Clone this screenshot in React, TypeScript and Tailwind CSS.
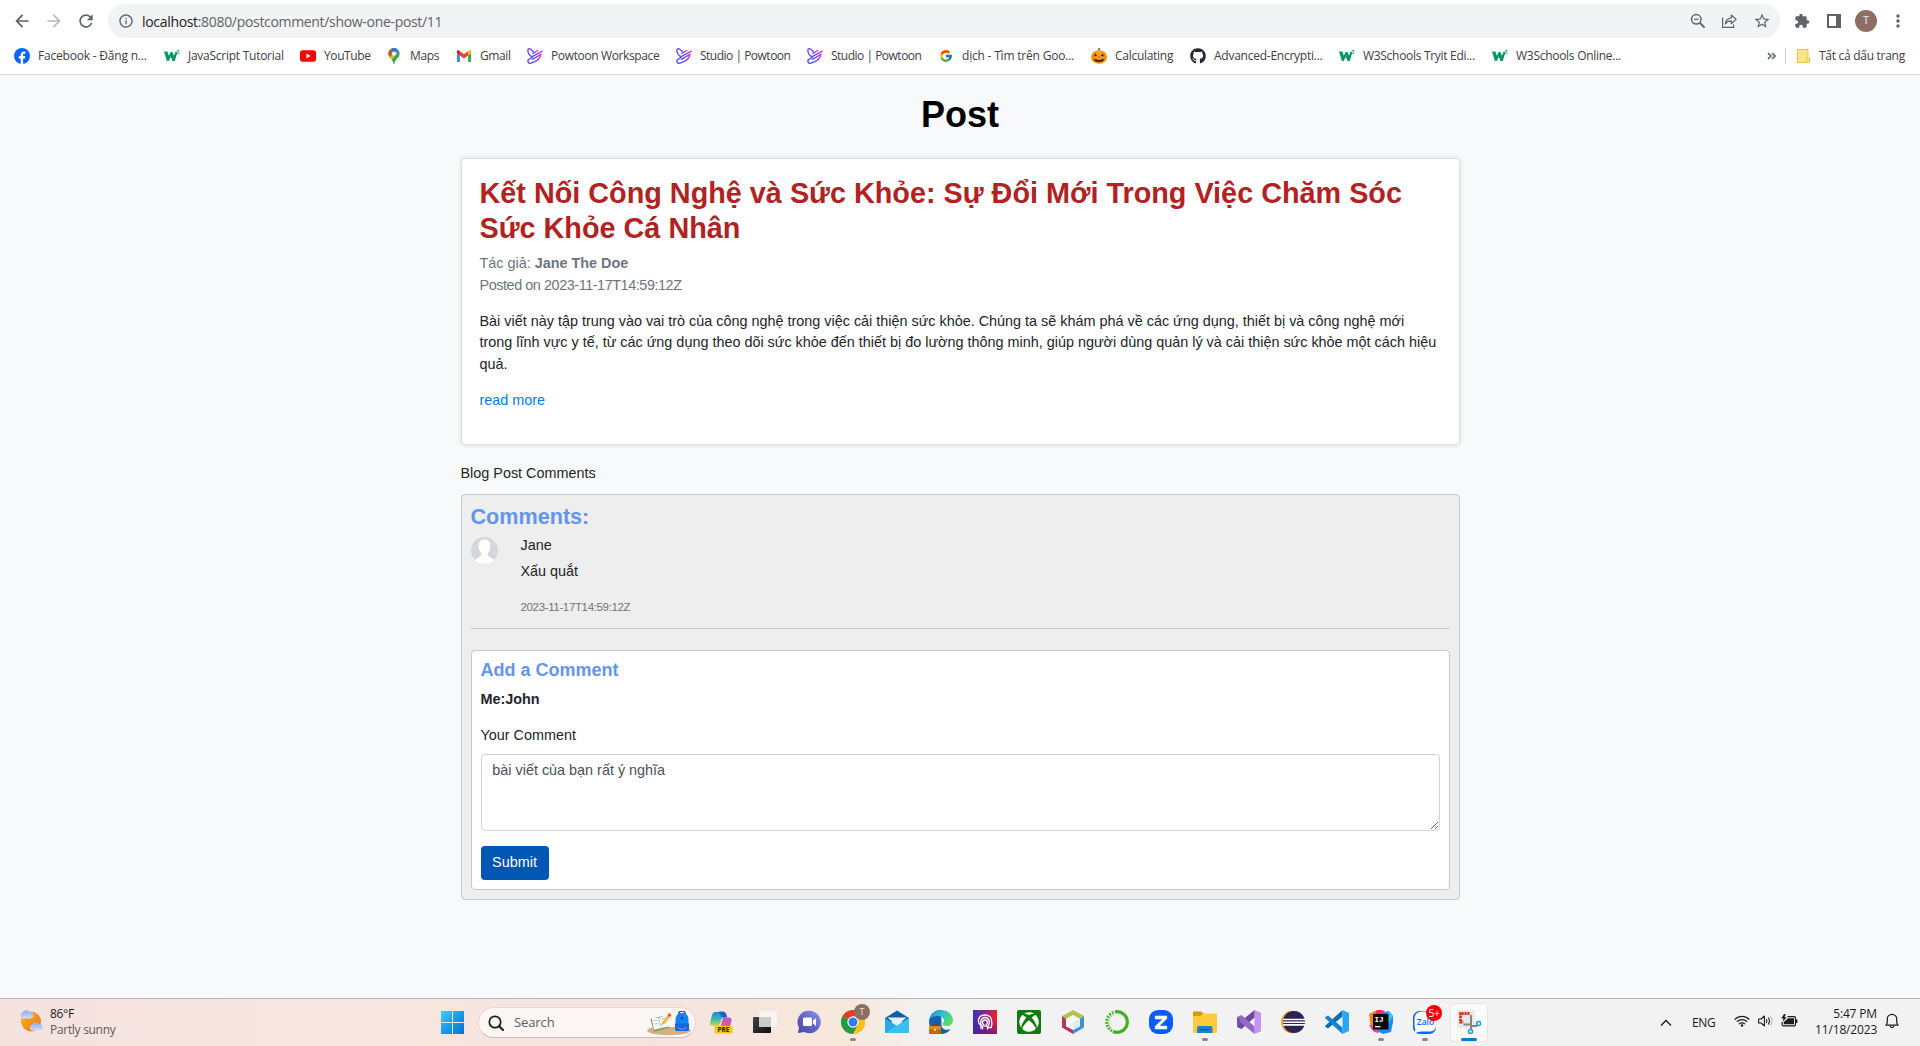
import React from "react";
import {
  MdArrowBack,
  MdArrowForward,
  MdExtension,
  MdInfoOutline,
  MdMoreVert,
  MdRefresh,
  MdStarBorder,
} from "react-icons/md";
import { FaGithub, FaXbox } from "react-icons/fa";
import { FcGoogle } from "react-icons/fc";

/* ---------- bookmark favicons ---------- */

const Facebook = () => (
  <svg viewBox="0 0 16 16" className="size-4">
    <circle cx="8" cy="8" r="8" fill="#0866ff" />
    <path d="M6.7 16v-5.4H4.9V8h1.8V6.9c0-2.3 1.1-3.5 3.3-3.5.5 0 1 .1 1.4.2v2.1h-1c-1 0-1.3.5-1.3 1.3v1h2.2l-.4 2.6H9.1V16z" fill="#fff" />
  </svg>
);

const W3 = () => (
  <svg viewBox="0 0 16 16" className="size-4">
    <path d="M0 3.600h3.400l1.400 4.200 1.600-3.600 2-.4 1.500 3.900 1.600-4h2L10.800 13H8.500L6.800 8.700 4.700 13H2.900z" fill="#059862" />
    <path d="M12.900 2.300h2.100l-1.100 1.400c1.500 0 1.600 1.900.2 1.900-.6 0-1-.2-1.200-.5" fill="none" stroke="#2fa87a" strokeWidth=".9" />
  </svg>
);

const YouTube = () => (
  <svg viewBox="0 0 16 16" className="size-4">
    <rect x="0" y="2.3" width="16" height="11.4" rx="2.8" fill="#f00" />
    <path d="m6.4 5.6 4.2 2.4-4.2 2.4z" fill="#fff" />
  </svg>
);

const Maps = () => (
  <svg viewBox="0 0 16 16" className="size-4">
    <clipPath id="pin">
      <path d="M8 0a5.6 5.6 0 0 1 5.6 5.6C13.6 9.800 9.300 11 8.500 15.400q-.5 1-1 0C6.700 11 2.400 9.800 2.400 5.600A5.600 5.600 0 0 1 8 0z" />
    </clipPath>
    <g clipPath="url(#pin)">
      <rect width="16" height="16" fill="#34a853" />
      <path d="M0 16V7l4 2.500L12 0l4 0v0L4.500 13z" fill="#fbbc04" />
      <path d="M0 0h8l-5 6-3-2z" fill="#ea4335" />
      <path d="M7 0h9v4L9 5.500z" fill="#4285f4" />
      <path d="M0 3l2.500-1L6 4.800 3 8.500z" fill="#ea4335" />
      <path d="m6 0 5.500.6L7 5z" fill="#1a73e8" />
    </g>
    <circle cx="8" cy="5.600" r="2.100" fill="#fff" />
  </svg>
);

const Gmail = () => (
  <svg viewBox="0 0 16 16" className="size-4">
    <path d="M1 14h2.900V7.300L1 5z" fill="#4285f4" />
    <path d="M12.100 14H15V5l-2.900 2.300z" fill="#34a853" />
    <path d="M12.100 3.200v4.200L15.200 5V4c0-1.700-1.500-2-2.500-1.300z" fill="#fbbc04" />
    <path d="M3.900 7.400V3.200L8 6.300l4.100-3.100v4.200L8 10.500z" fill="#ea4335" />
    <path d="M.8 4v1.100l3.100 2.300V3.200l-.6-.5C2.300 2 .8 2.400.8 4z" fill="#c5221f" />
  </svg>
);

const Powtoon = () => (
  <svg viewBox="0 0 16 16" className="size-4">
    <defs>
      <linearGradient id="ptn" x1="0" y1="1" x2="1" y2="0">
        <stop offset=".2" stopColor="#4a5cf5" />
        <stop offset=".6" stopColor="#9a3df0" />
        <stop offset="1" stopColor="#f02fd0" />
      </linearGradient>
    </defs>
    <g fill="none" stroke="url(#ptn)" strokeWidth="1.400" strokeLinecap="round" strokeLinejoin="round">
      <path d="M15.200 3.200 5.600 8.400C3.400 9 1 5.600.8 2.500.9.400 3 .3 4 1.500l2.200 1.900" />
      <path d="M10.800 2.500 5.800 5.300" />
      <path d="M13.500 7.100C13.300 9.800 11 12 8.300 13.300L4 15.200c-2.500.9-4.300-2.300-2.100-3.800l3.600-2.200" />
      <path d="M14.200 6.200 5.500 11.400" />
    </g>
  </svg>
);

const Google = () => <FcGoogle className="size-[14px] ml-px" />;

const Pumpkin = () => (
  <svg viewBox="0 0 16 16" className="size-4">
    <path d="M7.200 0h2l-.6 3.500H7z" fill="#5c913b" />
    <ellipse cx="8" cy="9" rx="8" ry="6.800" fill="#f4900c" />
    <ellipse cx="8" cy="9" rx="4" ry="6.800" fill="#f9a22b" />
    <path d="m2.800 8.300 1.700-3 1.800 3zM9.700 8.300l1.800-3 1.700 3zM7.200 9.600 8 8.200l.8 1.400zM2.500 10.400l1.500.9 1.200-.5 1.300 1h3l1.300-1 1.200.5 1.500-.9c-.6 2.600-2.700 3.800-5.500 3.800s-4.900-1.200-5.500-3.800z" fill="#5b2b08" />
  </svg>
);

const Github = () => <FaGithub className="size-4 text-[#24292f]" />;

type Bookmark = { icon: React.FC; label: string; box: string; track: string };

const bookmarks: Bookmark[] = [
  { icon: Facebook, label: "Facebook - Đăng n...", box: "w-[150px]", track: "tracking-[-0.2px]" },
  { icon: W3, label: "JavaScript Tutorial", box: "w-[136px]", track: "tracking-[-0.26px]" },
  { icon: YouTube, label: "YouTube", box: "w-[86px]", track: "tracking-[-0.4px]" },
  { icon: Maps, label: "Maps", box: "w-[70px]", track: "tracking-[-0.35px]" },
  { icon: Gmail, label: "Gmail", box: "w-[71px]", track: "tracking-[-0.4px]" },
  { icon: Powtoon, label: "Powtoon Workspace", box: "w-[149px]", track: "tracking-[-0.37px]" },
  { icon: Powtoon, label: "Studio | Powtoon", box: "w-[131px]", track: "tracking-[-0.5px]" },
  { icon: Powtoon, label: "Studio | Powtoon", box: "w-[131px]", track: "tracking-[-0.5px]" },
  { icon: Google, label: "dịch - Tìm trên Goo...", box: "w-[153px]", track: "tracking-[-0.2px]" },
  { icon: Pumpkin, label: "Calculating", box: "w-[99px]", track: "tracking-[-0.28px]" },
  { icon: Github, label: "Advanced-Encrypti...", box: "w-[149px]", track: "tracking-[-0.25px]" },
  { icon: W3, label: "W3Schools Tryit Edi...", box: "w-[153px]", track: "tracking-[-0.3px]" },
  { icon: W3, label: "W3Schools Online...", box: "w-[140px]", track: "tracking-[-0.28px]" },
];

function BrowserChrome() {
  return (
    <header className="h-[75px] border-b border-[#d5d7da] bg-white font-['Open_Sans','Noto_Sans',sans-serif]">
      <div className="flex h-[38px] items-end">
        <div className="flex h-[34px] w-[108px] items-center pl-3 text-[20px] text-[#5f6368]">
          <MdArrowBack />
          <MdArrowForward className="ml-3 text-[#babcbe]" />
          <MdRefresh className="ml-3" />
        </div>
        <div className="flex h-[34px] w-[1672px] items-center rounded-full bg-[#f1f3f4] pl-[10px] pr-[9px] text-[#5f6368]">
          <MdInfoOutline className="size-4" />
          <span className="ml-2 whitespace-nowrap text-[14px] tracking-[-0.32px] text-[#5f6368]">
            <span className="text-[#202124]">localhost</span>:8080/postcomment/show-one-post/11
          </span>
          <div className="ml-auto flex items-center gap-[15px]">
            <svg viewBox="0 0 16 16" className="size-4" fill="none" stroke="#5f6368" strokeWidth="1.500">
              <circle cx="6.300" cy="6.300" r="4.800" />
              <path d="m10 10 4.600 4.600" strokeWidth="1.900" />
              <path d="M4 6.300h4.600" strokeWidth="1.200" />
            </svg>
            <svg viewBox="0 0 17 16" className="h-4 w-[17px]" fill="none" stroke="#5f6368" strokeWidth="1.200">
              <path d="M1.600 4.500v9.900h11V11.500" />
              <path d="M4.300 11c.4-3.900 2.700-5.800 6-6V2l4.900 4.400-4.900 4.300V7.900c-2.600 0-4.500.8-6 3.100z" strokeLinejoin="round" />
            </svg>
            <MdStarBorder className="size-[18px]" />
          </div>
        </div>
        <div className="flex h-[34px] flex-1 items-center pl-[14px]">
          <MdExtension className="size-4 text-[#5f6368]" />
          <span className="ml-[17px] h-[14px] w-[14px] border-2 border-r-[5px] border-[#5f6368]" />
          <span className="ml-[14px] flex size-[22px] items-center justify-center rounded-full bg-[#8d6e63] font-[Roboto] text-[11px] text-[#ece4e1]">
            T
          </span>
          <MdMoreVert className="ml-[11px] size-5 text-[#5f6368]" />
        </div>
      </div>
      <div className="flex h-9 items-center pl-[14px] text-[12px] text-[#3c4043]">
        {bookmarks.map((b, i) => (
          <div key={i} className={`flex shrink-0 items-center gap-2 ${b.box}`}>
            <span className="flex w-4 shrink-0 items-center">
              <b.icon />
            </span>
            <span className={`whitespace-nowrap ${b.track}`}>{b.label}</span>
          </div>
        ))}
        <div className="ml-auto flex items-center pr-[15px]">
          <svg viewBox="0 0 9 8" className="h-2 w-[9px]" fill="none" stroke="#5f6368" strokeWidth="1.600">
            <path d="m1 1 3 3-3 3M5 1l3 3-3 3" />
          </svg>
          <span className="ml-[9px] h-4 w-px bg-[#c8cacd]" />
          <svg viewBox="0 0 13 14" className="ml-[11px] h-[14px] w-[13px]">
            <path d="M.5.500h10.500v8.500h1.500V13.500H.5z" fill="#ffe38a" stroke="#efc53d" />
            <path d="M9.500 13V10.500q.2-1.200 1.500-1.300" fill="none" stroke="#efc53d" />
          </svg>
          <span className="ml-[9px] w-[86px] whitespace-nowrap tracking-[-0.28px]">Tất cả dấu trang</span>
        </div>
      </div>
    </header>
  );
}

/* ---------- page ---------- */

function PostCard() {
  return (
    <article className="mt-[22px] h-[286.500px] rounded-[4px] border border-[#dcdee0] bg-white px-[18px] pt-[17px] shadow-[0_0_5px_rgba(0,0,0,0.12)]">
      <h2 className="text-[28.800px] font-bold leading-[34.560px] text-[#b22222]">
        Kết Nối Công Nghệ và Sức Khỏe: Sự Đổi Mới Trong Việc Chăm Sóc Sức Khỏe Cá Nhân
      </h2>
      <div className="mt-[7.800px] text-[#6c757d]">
        <p>
          Tác giả: <b>Jane The Doe</b>
        </p>
        <p className="tracking-[-0.43px]">Posted on 2023-11-17T14:59:12Z</p>
      </div>
      <p className="mt-[14.400px]">
        Bài viết này tập trung vào vai trò của công nghệ trong việc cải thiện sức khỏe. Chúng ta sẽ khám phá về các
        ứng dụng, thiết bị và công nghệ mới trong lĩnh vực y tế, từ các ứng dụng theo dõi sức khỏe đến thiết bị đo
        lường thông minh, giúp người dùng quản lý và cải thiện sức khỏe một cách hiệu quả.
      </p>
      <a className="mt-[14.400px] block text-[#007bff]">read more</a>
    </article>
  );
}

function Comments() {
  return (
    <section className="mt-[9.500px] h-[406px] rounded-[4px] border border-[#c8c8c8] bg-[#eeeeee] p-[9px]">
      <h4 className="text-[21.600px] font-bold leading-[25.920px] text-[#6495ed]">Comments:</h4>
      <div className="mt-[7px] flex">
        <svg viewBox="0 0 27 27" className="size-[27px] shrink-0">
          <clipPath id="face">
            <circle cx="13.500" cy="13.500" r="13.500" />
          </clipPath>
          <g clipPath="url(#face)">
            <rect width="27" height="27" fill="#d5d6dc" />
            <path d="M13.500 2.500c3.800 0 6 2.400 5.900 6.200-.1 3.600-1.200 5.800-2.400 7.300-.5 2 .1 3.500 1.600 4.200 2.300 1 4 1.700 4.600 3.200L23 28H4l-.2-4.600c.6-1.500 2.300-2.200 4.600-3.200 1.500-.7 2.100-2.200 1.600-4.200-1.200-1.500-2.300-3.700-2.400-7.300-.1-3.800 2.100-6.200 5.900-6.200z" fill="#fff" />
          </g>
        </svg>
        <div className="ml-[23px]">
          <p className="leading-[17.280px]">Jane</p>
          <p className="mt-[7px]">Xấu quắt</p>
          <p className="mt-[14px] text-[#6c757d]">
            <small className="text-[11.520px] tracking-[-0.36px]">2023-11-17T14:59:12Z</small>
          </p>
        </div>
      </div>
      <hr className="mt-[9.500px] border-[#c8c8c8]" />
      <form className="mt-[21px] h-[240px] rounded-[4px] border border-[#c8c8c8] bg-white p-[9px]">
        <h5 className="text-[18px] font-bold leading-[21.600px] text-[#6495ed]">Add a Comment</h5>
        <p className="mt-[7.200px] font-bold">Me:John</p>
        <label className="mt-[14.400px] block">Your Comment</label>
        <textarea
          className="mt-[7px] block h-[77px] w-full resize rounded-[4px] border border-[#ced4da] px-[10.800px] py-[5px] text-[#495057]"
          defaultValue="bài viết của bạn rất ý nghĩa"
        />
        <button type="button" className="mt-[15px] h-[34px] w-[68px] rounded-[4px] bg-[#0056b3] text-white">
          Submit
        </button>
      </form>
    </section>
  );
}

/* ---------- taskbar icons ---------- */

const Copilot = () => (
  <svg viewBox="0 0 24 24" className="size-6">
    <defs>
      <linearGradient id="cpA" x1="0" y1="0" x2="0" y2="1">
        <stop stopColor="#1d86e0" />
        <stop offset=".5" stopColor="#35b8b0" />
        <stop offset="1" stopColor="#d7d84a" />
      </linearGradient>
      <linearGradient id="cpB" x1="1" y1="0" x2="0" y2="1">
        <stop stopColor="#a45cf0" />
        <stop offset=".5" stopColor="#e0559b" />
        <stop offset="1" stopColor="#f89040" />
      </linearGradient>
    </defs>
    <path d="M6 2h8q2.500 0 3.200 2.500l.8 3h-5L10 16H3.500Q.5 16 1 13L3 5q.8-3 3-3z" fill="url(#cpA)" />
    <path d="M10 1.500h4q2.500 0 3.200 2.500l1 3.500h-4q-2 0-2.500-2z" fill="#1667c4" />
    <path d="M14 7.500h6q3 0 2.500 3L21 16q-1 3-3.500 3H9q2 0 2.600-2.500z" fill="url(#cpB)" />
    <rect x="5.500" y="16" width="18" height="7.500" rx="1.500" fill="#fcc40c" />
    <text x="14.500" y="22.200" fontSize="6.500" fontWeight="700" textAnchor="middle" fill="#222" fontFamily="Open Sans">PRE</text>
  </svg>
);

const TaskView = () => (
  <svg viewBox="0 0 24 24" className="size-6">
    <defs>
      <linearGradient id="tv" x1="0" y1="0" x2="1" y2="1">
        <stop stopColor="#444" />
        <stop offset="1" stopColor="#0d0d0d" />
      </linearGradient>
    </defs>
    <rect x="0" y="7" width="18" height="16" rx="1" fill="url(#tv)" />
    <rect x="6" y="1" width="18" height="16" rx="1" fill="#f7f5f4" />
    <rect x="6" y="7" width="12" height="10" fill="#cccbca" />
  </svg>
);

const Chat = () => (
  <svg viewBox="0 0 24 24" className="size-6">
    <defs>
      <linearGradient id="ch" x1="1" y1="0" x2="0" y2="1">
        <stop stopColor="#8d9bf0" />
        <stop offset=".5" stopColor="#6463c8" />
        <stop offset="1" stopColor="#4a46a0" />
      </linearGradient>
    </defs>
    <path d="M12.500.800a11.200 11.200 0 1 1-5 21.200L1 23l1-5.500A11.200 11.200 0 0 1 12.500.800z" fill="url(#ch)" />
    <rect x="6" y="7.500" width="9" height="8.500" rx="1.200" fill="#fff" />
    <path d="m16 10.500 3-2.500v8l-3-2.500z" fill="#fff" />
  </svg>
);

const ChromeIcon = () => (
  <span className="relative block size-6">
    <svg viewBox="0 0 24 24" className="size-6">
      <circle cx="12" cy="12" r="12" fill="#fbc116" />
      <path d="M12 12 1.600 6A12 12 0 0 1 22.400 6z" fill="#e33b2e" />
      <path d="M12 12 1.600 6A12 12 0 0 0 12 24l5.200-9z" fill="#249a41" />
      <path d="M12 6.500h10.700A12 12 0 0 1 12 24l4.800-9z" fill="#fbc116" />
      <circle cx="12" cy="12" r="5.700" fill="#fff" />
      <circle cx="12" cy="12" r="4.500" fill="#2f7bf0" />
    </svg>
    <span className="absolute -top-[6px] left-[13px] flex size-4 items-center justify-center rounded-full bg-[#8d6e63] font-[Roboto] text-[9px] leading-none text-[#e6dcd8]">
      T
    </span>
  </span>
);

const Mail = () => (
  <svg viewBox="0 0 24 24" className="size-6">
    <path d="M0 8 12 .500 24 8v4H0z" fill="#0f5ea8" />
    <path d="M2.500 7.500h19L12 16z" fill="#e9f1f6" />
    <path d="M0 8v15h24V8l-12 8z" fill="#2aa9e8" />
    <path d="M0 23 24 8v15z" fill="#39c0f2" />
  </svg>
);

const Edge = () => (
  <svg viewBox="0 0 24 24" className="size-6">
    <defs>
      <linearGradient id="eg" x1="0" y1="0" x2="1" y2=".6">
        <stop stopColor="#1b8fd8" />
        <stop offset=".55" stopColor="#2fc3cf" />
        <stop offset="1" stopColor="#5fdc5a" />
      </linearGradient>
    </defs>
    <path d="M12 0C5.500 0 .500 4.500 0 11.500 0 19 5 24 12 24c4 0 7.500-1.800 9.500-5-4 1.800-9 .5-9-4z" fill="#1361b0" />
    <path d="M.2 10C1.500 4 6 0 12 0c7 0 12 5 12 10.500 0 3.500-3 5.500-6 5.500-2.500 0-4.500-.8-4.500-2 0-.8 1.500-1.500 1.500-3.500 0-2.500-2.500-4.500-6.500-4.500C4.500 6 1.500 7.500.200 10z" fill="url(#eg)" />
    <rect x="0" y="16" width="12" height="8" rx="1" fill="#b96a12" />
    <rect x="0" y="16" width="12" height="3.500" rx="1" fill="#d98b1f" />
    <path d="M4 16v-1.500h4V16" fill="none" stroke="#7a430a" strokeWidth="1.200" />
    <rect x="5" y="18.500" width="2" height="2.500" fill="#ffcf4a" />
  </svg>
);

const HeadApp = () => (
  <svg viewBox="0 0 24 24" className="size-6">
    <defs>
      <linearGradient id="hd" x1="0" y1="0" x2="1" y2="0">
        <stop stopColor="#3a30c0" />
        <stop offset=".5" stopColor="#8a2090" />
        <stop offset="1" stopColor="#f5202c" />
      </linearGradient>
      <linearGradient id="hd2" x1="0" y1="0" x2="0" y2="1">
        <stop offset=".4" stopColor="#4a1c80" stopOpacity="0" />
        <stop offset="1" stopColor="#4a1c80" stopOpacity=".6" />
      </linearGradient>
    </defs>
    <rect width="24" height="24" fill="url(#hd)" />
    <rect width="24" height="24" fill="url(#hd2)" />
    <g fill="none" stroke="#fff" strokeWidth="1.300">
      <path d="M8 19v-3.500C3.500 12 5 5 12 5c5 0 7 3.500 6.500 7 .5 1 .8 1.500.3 2.500l-.6 3H15" />
      <path d="M9.500 19.500v-3C6 13 8 7.500 12 7.500s6 5.500 2.500 9v3" />
      <path d="M11 17v-2c-2.500-2-1.500-5 1-5s3.500 3 1 5v2" />
    </g>
  </svg>
);

const Xbox = () => (
  <span className="flex size-6 items-center justify-center rounded-[2px] bg-[#107c10]">
    <FaXbox className="size-5 text-white" />
  </span>
);

const NetBeans = () => (
  <svg viewBox="0 0 24 24" className="size-6">
    <path d="m12 0 11 6v11.500L12 24 1 17.500V6z" fill="#fff" />
    <path d="m12 0 11 6-4 3.200L12 5.500 5 9.200 1 6z" fill="#b3c34f" />
    <path d="M1 6l4 3v7l7 3.500V24L1 17.500z" fill="#b5365c" />
    <path d="M23 6l-4 3v7l-7 3.500V24l11-6.500z" fill="#3d8edb" />
    <path d="m12 5 7 3.800v7.400L12 20l-7-3.800V8.800z" fill="#f4f7f2" />
    <path d="m12 12 7-3.200v7.400L12 20z" fill="#e2ebee" />
  </svg>
);

const Anaconda = () => (
  <svg viewBox="0 0 24 24" className="size-6" fill="none" stroke="#3eb01f">
    <path d="M10 1.900A10.300 10.300 0 1 1 8 21.500" strokeWidth="3.200" />
    <path d="M8.500 2.300A10.300 10.300 0 0 0 7 21" strokeWidth="3" strokeDasharray="1.800 1.300" />
    <path d="M8.500 4.800A8 8 0 0 0 6.500 18" strokeWidth="1" strokeDasharray="1 1.500" />
  </svg>
);

const ZBlue = () => (
  <svg viewBox="0 0 24 24" className="size-6">
    <rect width="24" height="24" rx="9" fill="#0b5cff" />
    <path d="M6.500 6.500h11v1.700L9 16.500h8.500v2H6.500v-1.800L15 8.500H6.500z" fill="#fff" stroke="#fff" strokeWidth="1.300" strokeLinejoin="round" />
  </svg>
);

const Folder = () => (
  <svg viewBox="0 0 24 24" className="size-6">
    <path d="M0 2.500Q0 1.500 1 1.500h7.500L11 4h-1L8 7H0z" fill="#d99a06" />
    <path d="M0 6h7.500l2.500-2.500h13q1 0 1 1V22q0 1-1 1H1q-1 0-1-1z" fill="#fdcb3d" />
    <path d="M4 23v-5q0-2 2-2h11.500q2 0 2 2v5z" fill="#1f7fd0" />
    <rect x="7" y="19" width="9.500" height="1.600" rx=".8" fill="#135a9c" />
  </svg>
);

const VisualStudio = () => (
  <svg viewBox="0 0 24 24" className="size-6">
    <path d="M17.500 0 24 2.700v18.600L17.500 24z" fill="#c495f0" />
    <path d="M17.500 0v7.500L4.500 19 0 17v-2.500z" fill="#6a4a9c" />
    <path d="M0 7l4.500-2 13 11.500V24L0 9.500z" fill="#9668cc" />
    <path d="M0 7l3 2.500v5L0 17z" fill="#7b52ab" />
  </svg>
);

const Eclipse = () => (
  <svg viewBox="0 0 24 24" className="size-6">
    <circle cx="11.500" cy="12" r="11.300" fill="#f7941e" />
    <circle cx="13" cy="12" r="11" fill="#2c2255" />
    <path d="M2 8.700h22v1.600H2zM2 11.400h22V13H2zM2 14.100h22v1.600H2z" fill="#fff" />
  </svg>
);

const VSCode = () => (
  <svg viewBox="0 0 24 24" className="size-6">
    <path d="M17.500 0v6.500L3 18.500.500 17q-.8-.7 0-1.500z" fill="#0a6fb8" />
    <path d="M.5 8.500Q-.3 7.700.5 7L3 5.500l14.500 12V24z" fill="#1284cf" />
    <path d="M17.500 0 24 3v18l-6.500 3z" fill="#2aa7f0" />
  </svg>
);

const IntelliJ = () => (
  <svg viewBox="0 0 24 24" className="size-6">
    <path d="M0 4 8 0l7 6-6 17-7-4z" fill="#fc801d" />
    <path d="M8 0h5l5 3-5 5-8-1z" fill="#fe2857" />
    <path d="M13 3 20 1l4 5v6l-2 10-8 2-6-3z" fill="#1a8cf5" />
    <path d="m19 1 5 5-5 8z" fill="#38c4f5" />
    <path d="m0 15 5 1 5 7-5-1z" fill="#f33bb5" />
    <rect x="4" y="4" width="15.500" height="15.500" fill="#0a0a0a" />
    <text x="5.500" y="11.600" fontSize="7.500" fontWeight="700" fill="#fff" fontFamily="Liberation Mono">IJ</text>
    <rect x="6" y="16" width="5.500" height="1.300" fill="#fff" />
  </svg>
);

const Zalo = () => (
  <span className="relative block size-6">
    <svg viewBox="0 0 24 24" className="size-6">
      <rect x="0" y="1" width="23" height="23" rx="6.500" fill="#0a68ff" />
      <path d="M9 1.500h8q6 0 6 6v8q0 6-7 6H9q-3 0-4.500.8-1.500.6-3 .2 1-1.500.8-3-.8-2-.8-5v-5q0-8 7.500-8z" fill="#fff" />
      <text x="12.500" y="14.500" fontSize="8.500" fontWeight="600" textAnchor="middle" fill="#0a68ff" fontFamily="Open Sans">Zalo</text>
    </svg>
    <span className="absolute -top-[5px] left-[13px] flex size-4 items-center justify-center rounded-full bg-[#f40009] text-[10.500px] leading-none tracking-[-0.5px] text-white">
      5+
    </span>
  </span>
);

const Snip = () => (
  <svg viewBox="0 0 24 24" className="size-6">
    <rect x="0" y="0" width="18" height="18" rx="1" fill="#e9e9e9" />
    <path d="M12.500 3.500H3.500v8.500h3" fill="none" stroke="#c9390f" strokeWidth="2.800" strokeDasharray="2.200 .7" />
    <path d="M14 5v11h6M6.500 14.500H14v4.500" fill="none" stroke="#858585" strokeWidth="2" />
    <circle cx="21.700" cy="13.500" r="2" fill="none" stroke="#1aa0dc" strokeWidth="1.600" />
    <circle cx="13.500" cy="21.500" r="2" fill="none" stroke="#1aa0dc" strokeWidth="1.600" />
  </svg>
);

type App = { icon: React.FC; state?: "open" | "active" };

const apps: App[] = [
  { icon: Copilot },
  { icon: TaskView },
  { icon: Chat },
  { icon: ChromeIcon, state: "open" },
  { icon: Mail },
  { icon: Edge },
  { icon: HeadApp },
  { icon: Xbox },
  { icon: NetBeans },
  { icon: Anaconda },
  { icon: ZBlue },
  { icon: Folder, state: "open" },
  { icon: VisualStudio },
  { icon: Eclipse },
  { icon: VSCode },
  { icon: IntelliJ, state: "open" },
  { icon: Zalo, state: "open" },
  { icon: Snip, state: "active" },
];

const Weather = () => (
  <svg viewBox="0 0 24 24" className="size-6">
    <defs>
      <linearGradient id="sun" x1="0" y1="0" x2="1" y2="1">
        <stop stopColor="#f9b828" />
        <stop offset="1" stopColor="#f0700c" />
      </linearGradient>
      <linearGradient id="cld" x1="0" y1="0" x2="0" y2="1">
        <stop stopColor="#88a8e6" />
        <stop offset="1" stopColor="#cfe0fa" />
      </linearGradient>
    </defs>
    <circle cx="12" cy="12.500" r="10" fill="url(#sun)" />
    <path d="M3.500 9.500a3.200 3.200 0 0 1-.3-6A4.500 4.500 0 0 1 10.800 3a2.900 2.900 0 0 1 .6 6.500z" fill="url(#cld)" />
    <path d="M13 21.500a3.200 3.200 0 0 1-.3-6 4.500 4.500 0 0 1 7.600-.5 3.300 3.300 0 0 1 .6 6.500z" fill="url(#cld)" />
  </svg>
);

const SearchArt = () => (
  <svg viewBox="0 0 44 24" className="h-6 w-11">
    <path d="M0 20q1-4 10-4h24q9 0 10 4-4 4-22 4T0 20z" fill="#d7ae80" />
    <path d="m3.500 8 15-3.500 3.500 12L7 20.500z" fill="#5a9e48" />
    <path d="m4.500 6.500 7 .500 7.500-3 3 11.500-7 1.500-8 2z" fill="#f6f7f8" />
    <path d="m11.500 7 3 10.500M7 9.500l3.500-.2M8 13l3.500-.5M14 8.500l4-1.500M15 12l4-1.500" fill="none" stroke="#a9b0b8" strokeWidth=".7" />
    <path d="m15 11.500 6-8 2.500 2-6 7.500-3 1z" fill="#f6b73c" />
    <path d="m20.500 4 1.500-2 2.500 2-1.500 2z" fill="#ea4b4b" />
    <path d="M31.500 4q0-4 3.500-4t3.500 4" fill="none" stroke="#0b4aa8" strokeWidth="1.300" />
    <path d="M28.500 9q0-7 6.500-7t6.500 7v9q0 2-2 2h-9q-2 0-2-2z" fill="#1484f0" />
    <path d="M28 12.500h14V18q0 2-2 2H30q-2 0-2-2z" fill="#0a6ae4" />
    <path d="M30.500 16.500q4.500 3.500 9 0" fill="none" stroke="#c47cf0" strokeWidth="1" />
    <circle cx="35" cy="7" r="1.500" fill="#0b50b8" />
  </svg>
);

function Taskbar() {
  return (
    <footer className="flex h-12 items-center border-t border-[#b9b5b4] bg-[linear-gradient(90deg,#f6e3e0_0,#f6e5e1_350px,#f7e6de_430px,#f5e4e0_560px,#f6e5dd_740px,#f7e8dc_850px,#f2f1f0_920px,#f2f2f2_1000px)] font-['Open_Sans','Noto_Sans',sans-serif] text-[12px] text-[#1b1b1b]">
      <div className="flex w-[441px] items-center pl-[19px]">
        <span className="-mt-1">
          <Weather />
        </span>
        <div className="-mt-px ml-[7px] leading-4">
          <p className="tracking-[-0.3px]">86°F</p>
          <p className="tracking-[-0.3px] text-[#5e5857]">Partly sunny</p>
        </div>
      </div>
      <svg viewBox="0 0 23 23" className="size-[23px]">
        <defs>
          <linearGradient id="win" x1="0" y1="0" x2="1" y2="1">
            <stop stopColor="#4cc8f8" />
            <stop offset=".5" stopColor="#1a9be6" />
            <stop offset="1" stopColor="#0273d0" />
          </linearGradient>
        </defs>
        <path d="M0 0h11v11H0zM12 0h11v11H12zM0 12h11v11H0zM12 12h11v11H12z" fill="url(#win)" />
      </svg>
      <div className="ml-[14px] flex h-[31px] w-[218px] items-center rounded-full border border-[#e6d7d2] border-b-[#cdbeb9] bg-[#fcf6f4] pl-[9px] pr-[4px]">
        <svg viewBox="0 0 16 16" className="size-4" fill="none" stroke="#1b1b1b" strokeWidth="1.700" strokeLinecap="round">
          <circle cx="7" cy="7" r="5.700" />
          <path d="m11.200 11.200 3.800 3.800" strokeWidth="2" />
        </svg>
        <span className="ml-[10px] text-[13px] tracking-[-0.1px] text-[#605c5b]">Search</span>
        <span className="ml-auto">
          <SearchArt />
        </span>
      </div>
      <nav className="ml-[3px] flex h-full items-center">
        {apps.map((a, i) => (
          <div key={i} className="relative flex h-full w-11 items-center justify-center">
            {a.state === "active" && (
              <span className="absolute inset-x-[3px] inset-y-1 rounded-[4px] border border-[#e6e6e6] bg-[#fafafa]" />
            )}
            <span className="relative -mt-px">
              <a.icon />
            </span>
            {a.state === "open" && <span className="absolute bottom-[5px] h-[3px] w-[6px] rounded-full bg-[#8a8684]" />}
            {a.state === "active" && <span className="absolute bottom-[5px] h-[3px] w-4 rounded-full bg-[#0a78d4]" />}
          </div>
        ))}
      </nav>
      <div className="ml-auto flex items-center pr-[21px]">
        <svg viewBox="0 0 12 8" className="h-2 w-3" fill="none" stroke="#1b1b1b" strokeWidth="1.300">
          <path d="m1 6.500 5-5 5 5" />
        </svg>
        <span className="ml-5 w-6 tracking-[-0.3px]">ENG</span>
        <svg viewBox="0 0 16 12" className="ml-[18px] -mt-1 h-3 w-4" fill="none" stroke="#1b1b1b" strokeWidth="1.200">
          <path d="M.6 4.500a10.500 10.500 0 0 1 14.800 0M2.800 6.900a7.300 7.300 0 0 1 10.400 0M5 9.100a4.200 4.200 0 0 1 6 0" />
          <circle cx="8" cy="10.500" r="1.200" fill="#1b1b1b" stroke="none" />
        </svg>
        <svg viewBox="0 0 16 12" className="ml-2 -mt-1 h-3 w-4" fill="none" stroke="#1b1b1b" strokeWidth="1.100">
          <path d="M.6 4v4h2.500l3.300 3V1L3.100 4z" strokeLinejoin="round" />
          <path d="M8.300 4q1.300 2 0 4M10.200 2.500q2.500 3.500 0 7" />
          <path d="M12.300 1q3.500 5 0 10" stroke="#bdbdbd" />
        </svg>
        <svg viewBox="0 0 17 13" className="ml-[7px] -mt-1 h-[13px] w-[17px]" fill="none" stroke="#1b1b1b" strokeWidth="1.200">
          <path d="M6.500 2.600h6.700q1.300 0 1.300 1.300v6.700q0 1.300-1.300 1.300H2.400q-1.300 0-1.300-1.300V8" />
          <path d="M7 4.200h6v6H2.800V8L7 4.200z" fill="#1b1b1b" stroke="none" />
          <path d="M15.500 5.500v3.500" strokeWidth="1.800" />
          <path d="M3 0 .3 4.500h2.200L1.600 8l4-4.800H3.500L4.800 0z" fill="#1b1b1b" stroke="none" />
        </svg>
        <div className="-mt-px ml-[17px] w-[62px] whitespace-nowrap text-right leading-4 tracking-[-0.15px]">
          <p>5:47 PM</p>
          <p>11/18/2023</p>
        </div>
        <svg viewBox="0 0 14 16" className="ml-2 -mt-1 h-4 w-[14px]" fill="none" stroke="#1b1b1b" strokeWidth="1.200" strokeLinejoin="round">
          <path d="M1 12.200 2.300 9.500V6a4.700 4.700 0 0 1 9.400 0v3.500l1.300 2.700z" />
          <path d="M5 12.700q.4 2 2 2t2-2" />
        </svg>
      </div>
    </footer>
  );
}

export default function App() {
  return (
    <div className="flex h-[1046px] w-[1920px] flex-col overflow-hidden bg-[#f8f9fa]">
      <BrowserChrome />
      <main className="flex-1 bg-[#f8f9fb] font-['Liberation_Sans',Arial,sans-serif] text-[14.400px] leading-[21.600px] text-[#212529]">
        <div className="ml-[460.500px] w-[999px] pt-[18px]">
          <h1 className="text-center text-[36px] font-bold leading-[43px] text-black">Post</h1>
          <PostCard />
          <p className="mt-[18px]">Blog Post Comments</p>
          <Comments />
        </div>
      </main>
      <Taskbar />
    </div>
  );
}
